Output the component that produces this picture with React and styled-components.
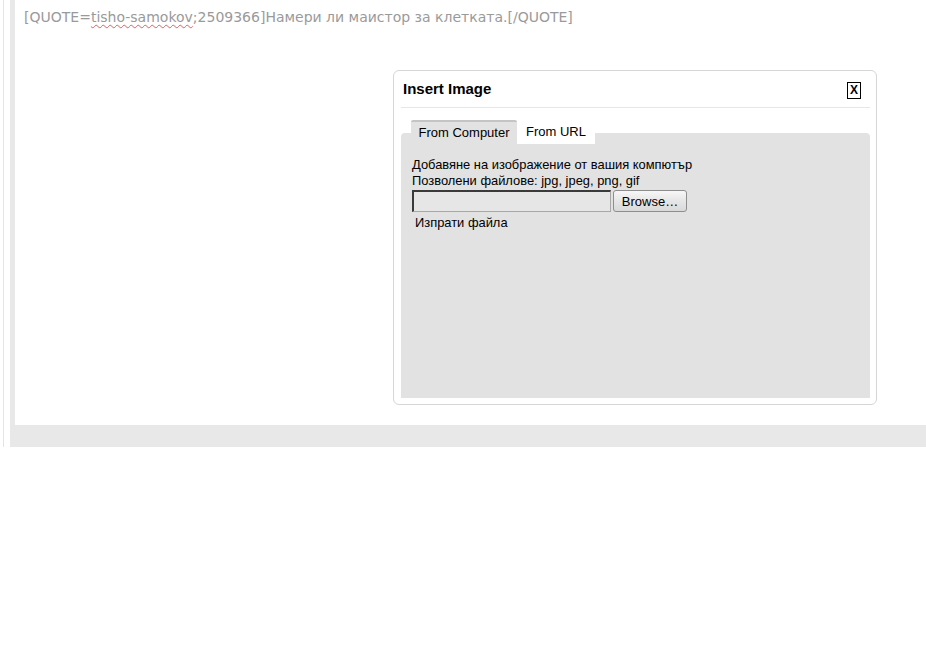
import styled, { createGlobalStyle } from "styled-components";

const GlobalStyle = createGlobalStyle`
  html, body {
    margin: 0;
    background: #fff;
  }
`;

const Shell = styled.div`
  margin-left: 3px;
  border-left: 1px solid #e4e4e4;
  padding-left: 6px;
  width: 917px;
`;
const Editor = styled.div`
  border-left: 5px solid #e8e8e8;
  display: flex;
  flex-direction: column;
`;
const Content = styled.div`
  position: relative;
  height: 425px;
  background: #fff;
  padding: 7px 9px;
  box-sizing: border-box;
`;
const QuoteText = styled.div`
  font-family: "DejaVu Sans", Verdana, sans-serif;
  font-size: 14px;
  line-height: 20px;
  color: #9a9a9a;
`;
const Misspelled = styled.span`
  text-decoration: underline wavy #e06060;
  text-decoration-thickness: 1px;
  text-underline-offset: 2px;
`;
const Footer = styled.div`
  height: 22px;
  background: #e8e8e8;
`;

const Dialog = styled.div`
  position: absolute;
  left: 378px;
  top: 70px;
  width: 484px;
  height: 335px;
  box-sizing: border-box;
  border: 1px solid #d6d6d6;
  border-radius: 6px;
  background: #fff;
  padding: 0 6px 6px 7px;
  display: flex;
  flex-direction: column;
  font-family: "Liberation Sans", Arial, sans-serif;
  color: #000;
`;
const Header = styled.div`
  height: 35px;
  display: flex;
  align-items: center;
  justify-content: space-between;
  padding: 0 9px 1px 2px;
  border-bottom: 1px solid #e6e6e6;
`;
const Title = styled.h3`
  margin: 0;
  font-size: 15px;
  font-weight: bold;
`;
const CloseBox = styled.button`
  width: 14px;
  height: 17px;
  padding: 0;
  border: 1px solid #000;
  background: #fff;
  font-family: "Liberation Sans", Arial, sans-serif;
  font-size: 12px;
  font-weight: bold;
  line-height: 14px;
  color: #000;
  margin-top: 3px;
`;
const TabBar = styled.div`
  position: relative;
  z-index: 1;
  display: flex;
  margin-top: 12px;
  padding-left: 10px;
  height: 24px;
`;
const Tab = styled.div`
  box-sizing: border-box;
  height: ${(p) => (p.$active ? "24px" : "23px")};
  margin-top: ${(p) => (p.$active ? "0" : "1px")};
  padding: 0 ${(p) => (p.$active ? "7.5px" : "9px")};
  font-size: 13px;
  line-height: 21px;
  background: ${(p) => (p.$active ? "#e2e2e2" : "#fff")};
  border-top: ${(p) => (p.$active ? "2px solid #c4c4c4" : "none")};
  border-radius: 2px 2px 0 0;
`;
const Panel = styled.div`
  flex: 1;
  margin-top: -11px;
  background: #e2e2e2;
  border-radius: 4px 4px 0 0;
  padding: 24px 11px 0;
  font-size: 12.9px;
  line-height: 16px;
`;
const FileRow = styled.div`
  display: flex;
  align-items: center;
  gap: 2px;
  margin-top: 1px;
`;
const FileInput = styled.div`
  box-sizing: border-box;
  width: 199px;
  height: 22px;
  background: #e6e6e6;
  border-top: 2px solid #3a3a3a;
  border-left: 2px solid #3a3a3a;
  border-right: 1px solid #a8a8a8;
  border-bottom: 1px solid #a8a8a8;
`;
const BrowseButton = styled.button`
  box-sizing: border-box;
  width: 74px;
  height: 22px;
  padding: 0;
  border: 1px solid #8e8e8e;
  border-radius: 3px;
  background: linear-gradient(#f7f7f7, #e6e6e6 50%, #d9d9d9);
  font-family: "Liberation Sans", Arial, sans-serif;
  font-size: 13px;
  color: #000;
`;
const SubmitLink = styled.div`
  margin: 3px 0 0 3px;
`;

export default function App() {
  return (
    <>
      <GlobalStyle />
      <Shell>
        <Editor>
          <Content>
            <QuoteText>
              [QUOTE=<Misspelled>tisho-samokov</Misspelled>;2509366]Намери ли маистор за клетката.[/QUOTE]
            </QuoteText>
            <Dialog>
              <Header>
                <Title>Insert Image</Title>
                <CloseBox>X</CloseBox>
              </Header>
              <TabBar>
                <Tab $active>From Computer</Tab>
                <Tab>From URL</Tab>
              </TabBar>
              <Panel>
                <div>Добавяне на изображение от вашия компютър</div>
                <div>Позволени файлове: jpg, jpeg, png, gif</div>
                <FileRow>
                  <FileInput />
                  <BrowseButton>Browse…</BrowseButton>
                </FileRow>
                <SubmitLink>Изпрати файла</SubmitLink>
              </Panel>
            </Dialog>
          </Content>
          <Footer />
        </Editor>
      </Shell>
    </>
  );
}
